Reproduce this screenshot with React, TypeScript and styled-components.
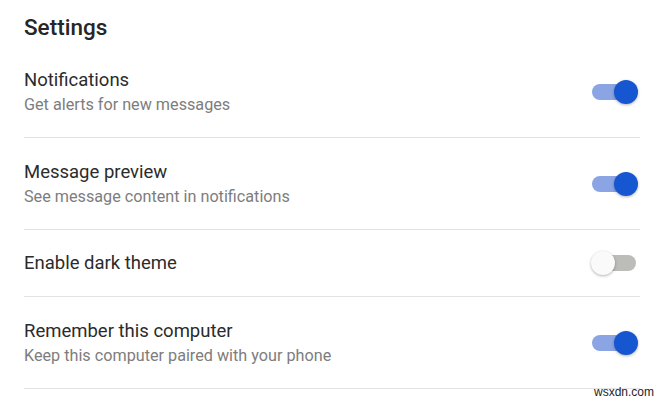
import React, { useState } from "react";
import styled, { createGlobalStyle } from "styled-components";

const GlobalStyle = createGlobalStyle`
  html, body {
    margin: 0;
    padding: 0;
    background: #ffffff;
  }
  body {
    font-family: Roboto, "Noto Sans", "Liberation Sans", sans-serif;
    -webkit-font-smoothing: antialiased;
  }
`;

const Page = styled.div`
  position: relative;
  width: 667px;
  height: 401px;
  overflow: hidden;
  background: #ffffff;
`;

const Panel = styled.section`
  width: 616px;
  padding-left: 24px;
`;

const Title = styled.h1`
  margin: 0;
  padding: 13px 0 5px;
  font-size: 22.5px;
  line-height: 28px;
  font-weight: 500;
  color: #262626;
`;

const Row = styled.div<{ $single?: boolean }>`
  display: flex;
  align-items: center;
  justify-content: space-between;
  padding: ${({ $single }) => ($single ? "20px 0 20px" : "21px 0 20px")};
  border-bottom: 1px solid #e3e3e3;
`;

const Labels = styled.div`
  display: flex;
  flex-direction: column;
`;

const Label = styled.span`
  font-size: 18.5px;
  line-height: 26px;
  color: #2b2b2b;
`;

const Hint = styled.span`
  font-size: 16.2px;
  line-height: 24px;
  color: #7d7d7d;
`;

const SwitchButton = styled.button`
  position: relative;
  width: 47px;
  height: 24px;
  margin-right: 2px;
  padding: 0;
  border: none;
  background: transparent;
  cursor: pointer;
`;

const Track = styled.span<{ $on: boolean }>`
  position: absolute;
  left: 1px;
  right: 2px;
  top: 4px;
  height: 16px;
  border-radius: 8px;
  background: ${({ $on }) => ($on ? "#8aa4e4" : "#bcbcb8")};
`;

const Thumb = styled.span<{ $on: boolean }>`
  position: absolute;
  top: 0;
  left: ${({ $on }) => ($on ? "23px" : "0")};
  width: 24px;
  height: 24px;
  border-radius: 50%;
  background: ${({ $on }) => ($on ? "#1656d0" : "#fafafa")};
  box-shadow: 0 1px 3px rgba(0, 0, 0, 0.3);
  transition: left 0.15s ease;
`;

const Watermark = styled.span`
  position: absolute;
  left: 594px;
  top: 385px;
  font-family: "Liberation Sans", Arial, sans-serif;
  font-size: 12px;
  line-height: 14px;
  color: #1e1e1e;
`;

type Item = { id: string; label: string; hint?: string; on: boolean };

const initial: Item[] = [
  { id: "notifications", label: "Notifications", hint: "Get alerts for new messages", on: true },
  { id: "preview", label: "Message preview", hint: "See message content in notifications", on: true },
  { id: "dark", label: "Enable dark theme", on: false },
  { id: "remember", label: "Remember this computer", hint: "Keep this computer paired with your phone", on: true },
];

function Toggle({ on, onChange }: { on: boolean; onChange: () => void }) {
  return (
    <SwitchButton role="switch" aria-checked={on} onClick={onChange}>
      <Track $on={on} />
      <Thumb $on={on} />
    </SwitchButton>
  );
}

export default function App() {
  const [items, setItems] = useState(initial);

  const flip = (id: string) =>
    setItems((list) => list.map((it) => (it.id === id ? { ...it, on: !it.on } : it)));

  return (
    <Page>
      <GlobalStyle />
      <Panel>
        <Title>Settings</Title>
        {items.map((it) => (
          <Row key={it.id} $single={!it.hint}>
            <Labels>
              <Label>{it.label}</Label>
              {it.hint && <Hint>{it.hint}</Hint>}
            </Labels>
            <Toggle on={it.on} onChange={() => flip(it.id)} />
          </Row>
        ))}
      </Panel>
      <Watermark>wsxdn.com</Watermark>
    </Page>
  );
}
